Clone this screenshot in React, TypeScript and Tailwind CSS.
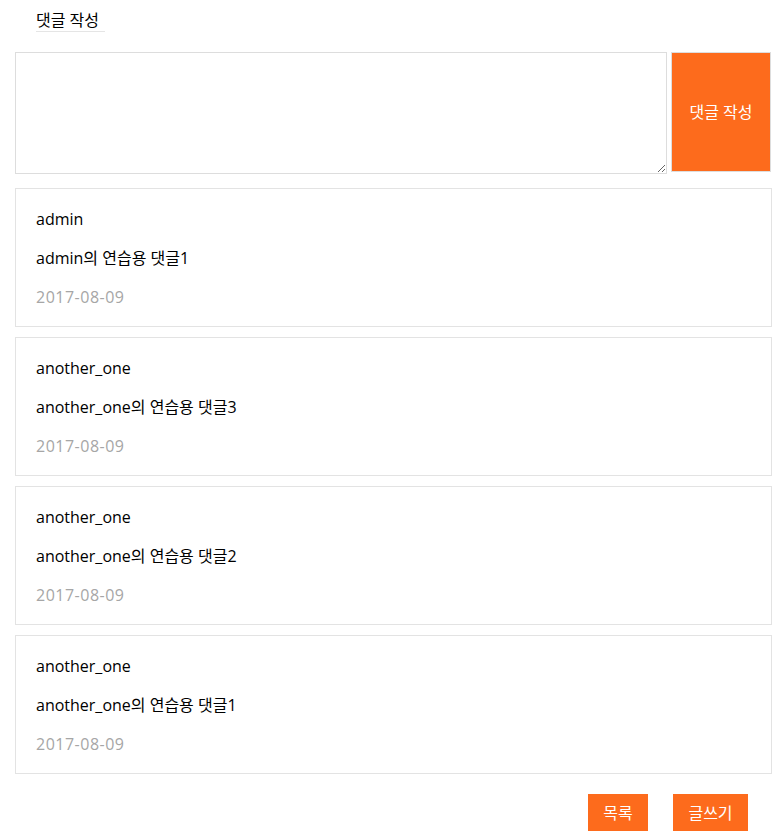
const comments = [
  { author: "admin", body: "admin의 연습용 댓글1", date: "2017-08-09" },
  { author: "another_one", body: "another_one의 연습용 댓글3", date: "2017-08-09" },
  { author: "another_one", body: "another_one의 연습용 댓글2", date: "2017-08-09" },
  { author: "another_one", body: "another_one의 연습용 댓글1", date: "2017-08-09" },
];

export default function App() {
  return (
    <div
      className="w-[783px] bg-white text-black"
      style={{ fontFamily: '"Open Sans", "Noto Sans CJK KR", sans-serif' }}
    >
      <div className="ml-[15px] w-[757px] pt-[10px]">
        <div className="pl-[21px]">
          <span className="block w-fit border-b border-[#e5e5e5] pr-[6px] text-[16px] leading-[21px]">
            댓글 작성
          </span>
        </div>

        <div className="mt-[20px] flex gap-[4px]">
          <textarea className="h-[122px] w-[652px] resize-y border border-[#dddddd] outline-none" />
          <button className="h-[120px] w-[100px] border border-[#dddddd] bg-[#fd6b1c] text-[16px] text-white">
            댓글 작성
          </button>
        </div>

        <ul className="mt-[14px] flex flex-col gap-[10px]">
          {comments.map((c, idx) => (
            <li
              key={idx}
              className="flex flex-col gap-[15px] border border-[#e3e3e3] pl-[20px] pt-[18px] pb-[17px] text-[16px] leading-6"
            >
              <div>{c.author}</div>
              <div>{c.body}</div>
              <div className="tracking-[0.5px] text-[#a6a6a6]">{c.date}</div>
            </li>
          ))}
        </ul>

        <div className="mt-[20px] flex justify-end gap-[25px] pr-[24px] pb-[5px]">
          <button className="h-[37px] w-[60px] bg-[#fd6b1c] text-[16px] text-white">목록</button>
          <button className="h-[37px] w-[75px] bg-[#fd6b1c] text-[16px] text-white">글쓰기</button>
        </div>
      </div>
    </div>
  );
}
